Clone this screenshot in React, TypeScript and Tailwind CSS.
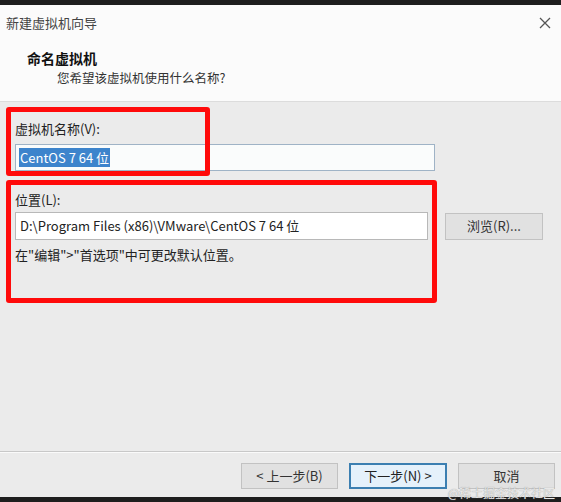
const font = { fontFamily: '"Noto Sans CJK SC", "Liberation Sans", sans-serif' }

function Btn({ label, primary }: { label: string; primary?: boolean }) {
  return (
    <button
      className={
        primary
          ? "w-[98px] h-[26px] bg-[#e5f1fb] border-2 border-[#3c7fb1] text-[13px] text-[#222] flex items-center justify-center"
          : "w-[97px] h-[26px] bg-[#e1e1e1] border border-[#c2c2c2] text-[13px] text-[#333] flex items-center justify-center"
      }
    >
      {label}
    </button>
  )
}

export default function App() {
  return (
    <div className="relative w-[561px] h-[502px] bg-[#ebebeb] flex flex-col overflow-hidden" style={font}>
      <div className="h-[5px] bg-[#1e1e1e]" />

      {/* title bar */}
      <div className="h-[35px] bg-[#fbfbfb] flex items-center justify-between pl-[6px] pr-[10px]">
        <span className="text-[13px] text-[#444]">新建虚拟机向导</span>
        <svg width="12" height="12" viewBox="0 0 12 12">
          <path d="M1 1 L11 11 M11 1 L1 11" stroke="#555" strokeWidth="1.3" />
        </svg>
      </div>

      {/* header */}
      <div className="h-[62px] bg-[#fbfbfb] border-b border-[#dcdcdc] flex flex-col pt-[9px]">
        <span className="pl-[27px] text-[14px] font-bold text-[#111] leading-[18px]">命名虚拟机</span>
        <span className="pl-[57px] mt-[2px] text-[12.5px] text-[#333] leading-[18px]">您希望该虚拟机使用什么名称?</span>
      </div>

      {/* body */}
      <div className="flex-1 flex flex-col pl-[15px] pr-[18px]">
        <span className="mt-[19px] text-[13px] leading-[16px] text-[#222]">虚拟机名称(V):</span>
        <div className="mt-[7px] w-[420px] h-[27px] bg-[#fafcfc] border border-[#9fb3c6] flex items-center pl-[3px]">
          <span className="bg-[#3d84cc] text-white text-[13px] leading-[19px] px-[1px]">CentOS 7 64 位</span>
        </div>

        <span className="mt-[21px] text-[13px] leading-[16px] text-[#222]">位置(L):</span>
        <div className="mt-[4px] flex items-center gap-[17px]">
          <div className="w-[413px] h-[28px] bg-white border border-[#b8b8b8] flex items-center pl-[4px] text-[13px] text-[#222]">
            D:\Program Files (x86)\VMware\CentOS 7 64 位
          </div>
          <button className="w-[98px] h-[27px] bg-[#e1e1e1] border border-[#c2c2c2] text-[13px] text-[#333]">
            浏览(R)...
          </button>
        </div>
        <span className="mt-[7px] text-[13px] leading-[16px] text-[#222]">在"编辑"&gt;"首选项"中可更改默认位置。</span>
      </div>

      {/* separator + footer */}
      <div className="h-[1px] bg-[#c8c8c8]" />
      <div className="h-[1px] bg-[#fafafa]" />
      <div className="h-[44px] flex items-start justify-end gap-[11px] pt-[10px] pr-[6px]">
        <Btn label="< 上一步(B)" />
        <Btn label="下一步(N) >" primary />
        <Btn label="取消" />
      </div>
      <div className="h-[5px] bg-[#1e1e1e]" />

      {/* annotation boxes */}
      <div className="absolute left-[6px] top-[107px] w-[204px] h-[69px] border-[5px] border-[#ff0a0a] rounded-[3px]" />
      <div className="absolute left-[6px] top-[180px] w-[431px] h-[123px] border-[5px] border-[#ff0a0a] rounded-[3px]" />

      {/* watermark */}
      <span className="absolute right-[6px] bottom-[3px] text-[12px] leading-[12px] text-[#e8e8e8] [text-shadow:0_0_1px_#888]">@稀土掘金技术社区</span>
    </div>
  )
}
